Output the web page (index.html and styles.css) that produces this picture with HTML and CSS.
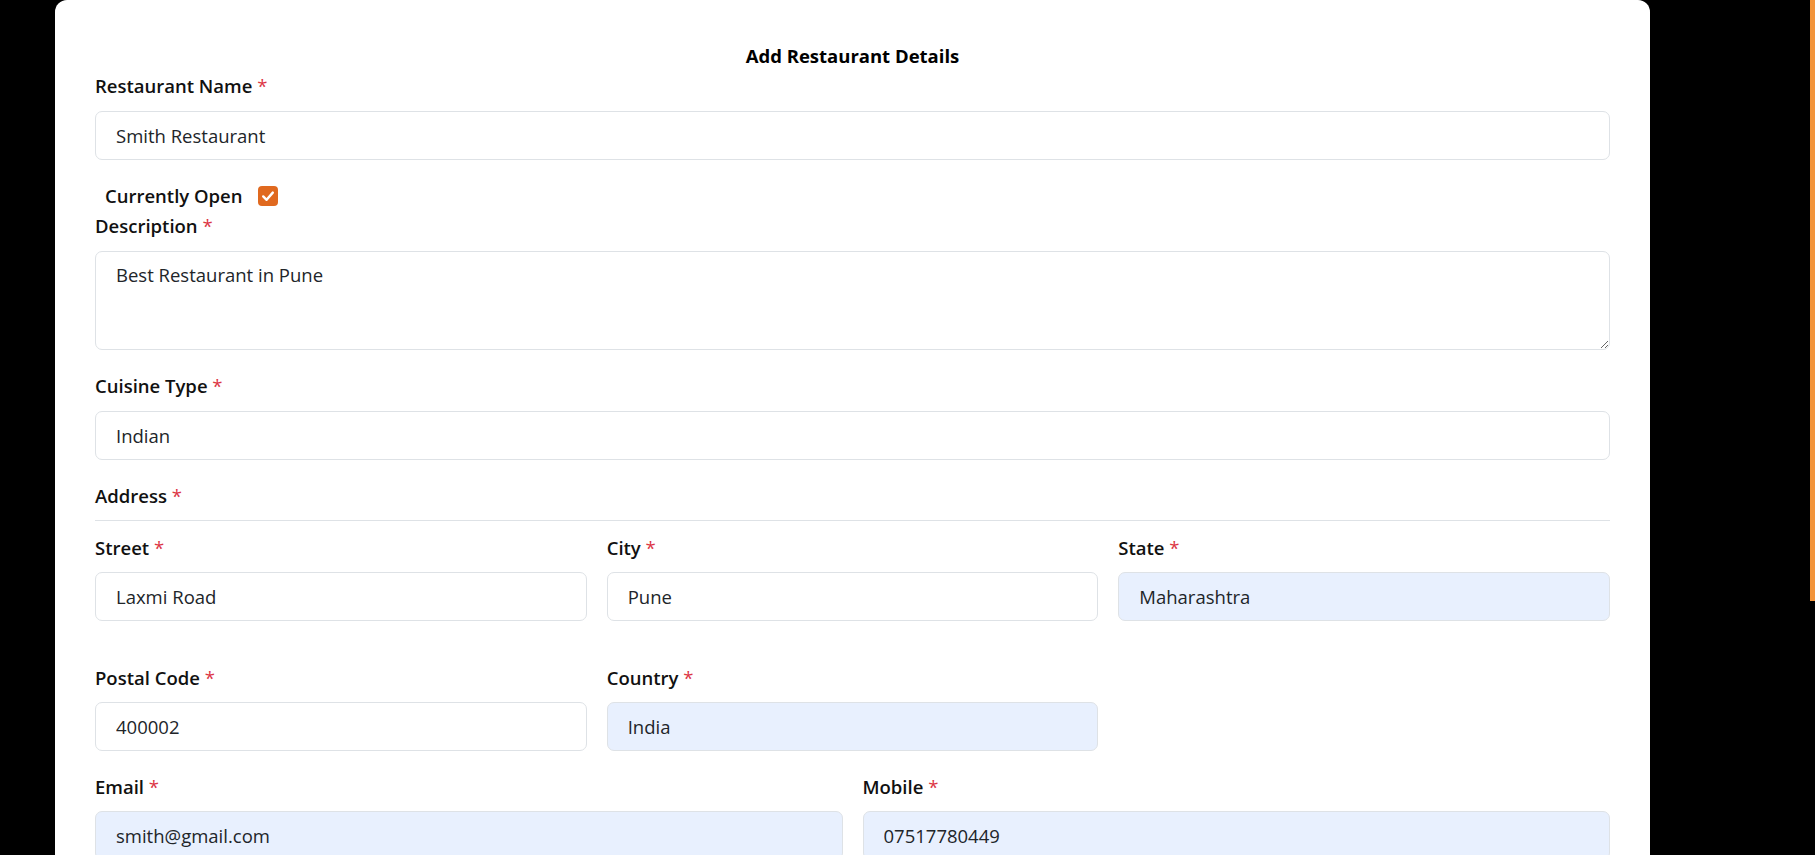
FILE: index.html
```html
<!DOCTYPE html>
<html lang="en">
<head>
<meta charset="utf-8">
<title>Add Restaurant Details</title>
<link rel="stylesheet" href="styles.css">
</head>
<body>
<div class="app">
  <main class="main">
    <form class="card">
      <h2 class="title">Add Restaurant Details</h2>

      <div class="field">
        <label class="label" for="name">Restaurant Name <span class="req">*</span></label>
        <input class="control" id="name" type="text" value="Smith Restaurant">
      </div>

      <label class="toggle">Currently Open
        <span class="checkbox"><svg viewBox="0 0 20 20" width="20" height="20"><path d="M5.2 10.4 L8.6 13.8 L14.8 6.6" fill="none" stroke="#fff" stroke-width="2.4" stroke-linecap="round" stroke-linejoin="round"/></svg></span>
      </label>

      <div class="field">
        <label class="label" for="desc">Description <span class="req">*</span></label>
        <textarea class="control area" id="desc">Best Restaurant in Pune</textarea>
      </div>

      <div class="field">
        <label class="label" for="cuisine">Cuisine Type <span class="req">*</span></label>
        <input class="control" id="cuisine" type="text" value="Indian">
      </div>

      <div class="section-head">Address <span class="req">*</span></div>

      <div class="grid grid3 row-gap">
        <div>
          <label class="label" for="street">Street <span class="req">*</span></label>
          <input class="control" id="street" type="text" value="Laxmi Road">
        </div>
        <div>
          <label class="label" for="city">City <span class="req">*</span></label>
          <input class="control" id="city" type="text" value="Pune">
        </div>
        <div>
          <label class="label" for="state">State <span class="req">*</span></label>
          <input class="control filled" id="state" type="text" value="Maharashtra">
        </div>
      </div>

      <div class="grid grid3 row">
        <div>
          <label class="label" for="postal">Postal Code <span class="req">*</span></label>
          <input class="control" id="postal" type="text" value="400002">
        </div>
        <div>
          <label class="label" for="country">Country <span class="req">*</span></label>
          <input class="control filled" id="country" type="text" value="India">
        </div>
      </div>

      <div class="grid grid2 row">
        <div>
          <label class="label" for="email">Email <span class="req">*</span></label>
          <input class="control filled" id="email" type="email" value="smith@gmail.com">
        </div>
        <div>
          <label class="label" for="mobile">Mobile <span class="req">*</span></label>
          <input class="control filled" id="mobile" type="text" value="07517780449">
        </div>
      </div>
    </form>
  </main>
  <div class="rail"><div class="thumb"></div></div>
</div>
</body>
</html>
```

FILE: styles.css
```css
html, body {
  margin: 0;
  padding: 0;
  background: #000;
}

body {
  font-family: "Open Sans", "Noto Sans", sans-serif;
  color: #212529;
}

.app {
  display: flex;
  height: 100vh;
  overflow: hidden;
}

.main {
  flex: 1;
  overflow: hidden;
}

.rail {
  flex: none;
  width: 5px;
  background: #000;
}

.thumb {
  height: 601px;
  background: #f2943a;
}

.card {
  box-sizing: border-box;
  width: 1595px;
  margin-left: 55px;
  min-height: 1216px;
  padding: 40px 40px 60px;
  background: #fff;
  border-radius: 12px 12px 0 0;
}

.title {
  margin: 0;
  padding-top: 2px;
  font-size: 18.5px;
  font-weight: 700;
  line-height: 28px;
  text-align: center;
  color: #000;
}

.field {
  margin-bottom: 20px;
}

.label {
  display: block;
  margin-bottom: 11px;
  padding-top: 2px;
  font-size: 18.5px;
  font-weight: 600;
  line-height: 28px;
  color: #111;
}

.grid .label {
  margin-bottom: 10px;
}

.req {
  color: #dc3545;
  font-weight: 400;
}

.control {
  display: block;
  box-sizing: border-box;
  width: 100%;
  height: 49px;
  margin: 0;
  padding: 0 20px;
  font-family: inherit;
  font-size: 18.5px;
  line-height: 30px;
  color: #212529;
  background: #fff;
  border: 1px solid #dee2e6;
  border-radius: 7px;
  outline: none;
}

.control.filled {
  background: #e8f0fe;
}

.area {
  height: 99px;
  padding-top: 8px;
  padding-bottom: 8px;
  resize: vertical;
}

.toggle {
  display: flex;
  align-items: center;
  gap: 15px;
  padding-top: 2px;
  padding-left: 10px;
  font-size: 18.5px;
  font-weight: 600;
  line-height: 28px;
  color: #111;
}

.checkbox {
  display: flex;
  width: 20px;
  height: 20px;
  border-radius: 4px;
  background: #e0691f;
}

.section-head {
  padding-top: 2px;
  padding-bottom: 10px;
  margin-bottom: 11px;
  border-bottom: 1px solid #dee2e6;
  font-size: 18.5px;
  font-weight: 600;
  line-height: 28px;
  color: #111;
}

.grid {
  display: grid;
  column-gap: 20px;
}

.grid3 {
  grid-template-columns: repeat(3, 1fr);
}

.grid2 {
  grid-template-columns: repeat(2, 1fr);
}

.row-gap {
  margin-bottom: 41px;
}

.row {
  margin-bottom: 20px;
}
```
